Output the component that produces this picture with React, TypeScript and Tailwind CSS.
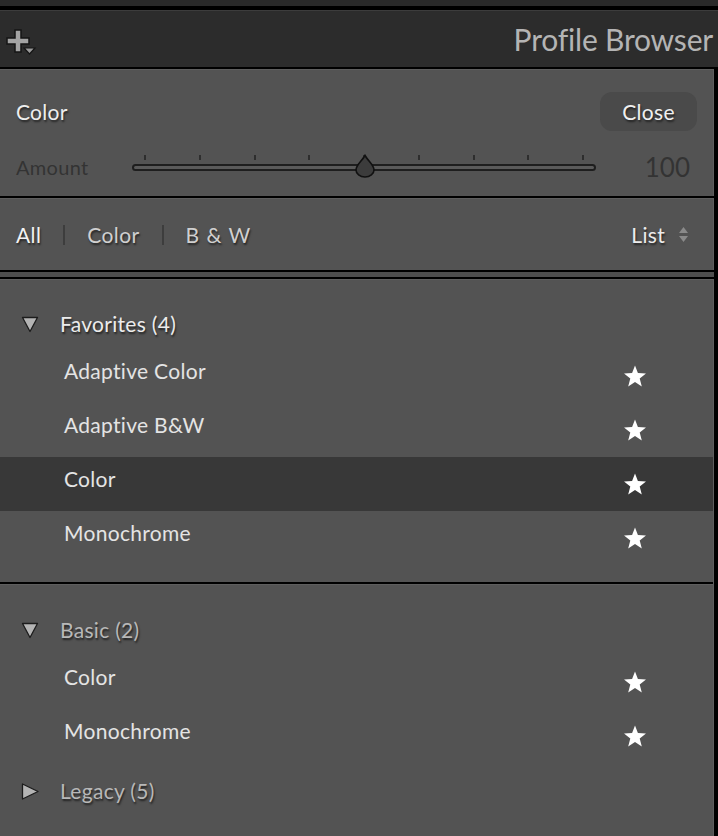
import React from 'react';

const font = { fontFamily: 'Lato, "Open Sans", sans-serif' };

function PlusIcon() {
  return (
    <svg width="32" height="28" viewBox="0 0 32 28">
      <path
        d="M8 0h6v8h8v6h-8v8H8v-8H0V8h8z"
        transform="translate(1 1)"
        fill="#a3a3a3"
        stroke="#151515"
        strokeWidth="1.5"
      />
      <path d="M18 19h11l-5.5 6z" fill="#9a9a9a" stroke="#151515" strokeWidth="1.2" />
    </svg>
  );
}

function Star() {
  return (
    <svg width="24" height="23" viewBox="0 0 24 23">
      <path
        d="M12 0.5l2.9 7.6 8.1.4-6.3 5.1 2.1 7.9L12 17l-6.8 4.5 2.1-7.9L1 8.5l8.1-.4z"
        fill="#ffffff"
      />
    </svg>
  );
}

function DownTri() {
  return (
    <svg width="18" height="17" viewBox="0 0 18 17">
      <path d="M1.5 1.5h15L9 15.5z" fill="#b4b4b4" stroke="#1c1c1c" strokeWidth="1.3" strokeLinejoin="round" />
    </svg>
  );
}

function RightTri() {
  return (
    <svg width="19" height="17" viewBox="0 0 19 17">
      <path d="M1.5 1L17 8.5 1.5 16z" fill="#b4b4b4" stroke="#1c1c1c" strokeWidth="1.3" strokeLinejoin="round" />
    </svg>
  );
}

function Thumb() {
  return (
    <svg width="22" height="24" viewBox="0 0 22 24">
      <path
        d="M11 1.5C8 7 2 11 2 16a9 7 0 0 0 18 0c0-5-6-9-9-14.5z"
        fill="#3c3c3c"
        stroke="#111"
        strokeWidth="1.6"
      />
    </svg>
  );
}

const shadow = '[text-shadow:1px_2px_2px_rgba(0,0,0,0.55)]';

function Item({ name, selected }: { name: string; selected?: boolean }) {
  return (
    <div
      className={`h-[54px] flex items-center justify-between pl-[64px] pr-[66px] ${
        selected ? 'bg-[#383838]' : ''
      }`}
    >
      <span className="text-[21px] tracking-[0.3px] text-[#e4e4e4] pb-[10px]">{name}</span>
      <Star />
    </div>
  );
}

function GroupHeader({ label, open, dim }: { label: string; open: boolean; dim?: boolean }) {
  return (
    <div className="h-[50px] flex items-center pl-[21px]">
      <div className="w-[39px]">{open ? <DownTri /> : <RightTri />}</div>
      <span
        className={`text-[21px] tracking-[0.3px] [text-shadow:1px_2px_2px_rgba(0,0,0,0.6)] ${
          dim ? 'text-[#b8b8b8]' : 'text-[#ececec]'
        }`}
      >
        {label}
      </span>
    </div>
  );
}

export default function App() {
  const ticks = [0, 1, 2, 3, 4, 5, 6, 7, 8];
  return (
    <div className="w-[718px] h-[836px] bg-[#535353] flex flex-col overflow-hidden" style={font}>
      <div className="h-[6px] bg-[#2a2a2a]" />
      <div className="h-[4px] bg-black" />
      <div className="h-[57px] bg-[#2c2c2c] border-t border-[#3c3c3c] flex items-center justify-between pl-[6px] pr-[5px]">
        <div className="pt-[7px]">
          <PlusIcon />
        </div>
        <span className="text-[30px] text-[#b4b4b4] tracking-[-0.2px]">Profile Browser</span>
      </div>
      <div className="h-[2px] bg-black" />

      <div className="flex-1 flex flex-col border-r-4 border-black">
        {/* amount section */}
        <div className="h-[127px] border-t border-r border-[#5e5e5e] pl-[16px] pr-[16px] pt-[22px]">
          <div className="flex items-center justify-between h-[39px]">
            <span className={`text-[21px] tracking-[0.3px] text-[#eeeeee] ${shadow}`}>Color</span>
            <button
              className={`h-[39px] w-[97px] rounded-[12px] bg-[#4a4a4a] text-[21px] tracking-[0.3px] text-[#f0f0f0] ${shadow}`}
            >
              Close
            </button>
          </div>
          <div className="flex items-center h-[38px] mt-[17px]">
            <span className="w-[116px] text-[20px] tracking-[0.3px] text-[#333333]">Amount</span>
            <div className="relative w-[464px] h-[26px]">
              <div className="absolute left-[12px] right-[12px] top-[1px] flex justify-between">
                {ticks.map((t) => (
                  <div key={t} className="w-[2px] h-[5px] bg-[#2e2e2e]" />
                ))}
              </div>
              <div className="absolute left-0 right-0 top-[10px] h-[7px] rounded-full border-2 border-[#1e1e1e] bg-[#5a5a5a]" />
              <div className="absolute left-[222px] top-[0px]">
                <Thumb />
              </div>
            </div>
            <span className="flex-1 text-right text-[26px] text-[#333333] pr-[7px]">100</span>
          </div>
        </div>
        <div className="h-[2px] bg-black" />

        {/* filter bar */}
        <div className="h-[72px] border-t border-r border-[#5e5e5e] flex items-center justify-between pl-[16px] pr-[24px]">
          <div className={`flex items-center text-[21px] tracking-[0.4px] ${shadow}`}>
            <span className="text-[#f2f2f2]">All</span>
            <span className="mx-[22px] w-[2px] h-[20px] bg-[#3d3d3d]" />
            <span className="text-[#d0d0d0]">Color</span>
            <span className="mx-[22px] w-[2px] h-[20px] bg-[#3d3d3d]" />
            <span className="text-[#d0d0d0] tracking-[1px]">B &amp; W</span>
          </div>
          <div className="flex items-center gap-[13px]">
            <span className={`text-[21px] tracking-[0.3px] text-[#ececec] ${shadow}`}>List</span>
            <svg width="11" height="17" viewBox="0 0 11 17">
              <path d="M5.5 1L10 7H1z" fill="#8a8a8a" />
              <path d="M5.5 16L10 10H1z" fill="#8a8a8a" />
            </svg>
          </div>
        </div>
        <div className="h-[2px] bg-black" />
        <div className="h-[5px] bg-[#4e4e4e]" />
        <div className="h-[2px] bg-black" />

        {/* profile list */}
        <div className="flex-1 border-t border-r border-[#5e5e5e] pt-[19px]">
          <GroupHeader label="Favorites (4)" open />
          <Item name="Adaptive Color" />
          <Item name="Adaptive B&W" />
          <Item name="Color" selected />
          <Item name="Monochrome" />
          <div className="h-[17px]" />
          <div className="h-[2px] bg-black" />
          <div className="h-[1px] bg-[#5e5e5e]" />
          <div className="h-[20px]" />
          <GroupHeader label="Basic (2)" open dim />
          <Item name="Color" />
          <Item name="Monochrome" />
          <div className="h-[3px]" />
          <GroupHeader label="Legacy (5)" open={false} dim />
        </div>
      </div>
    </div>
  );
}
